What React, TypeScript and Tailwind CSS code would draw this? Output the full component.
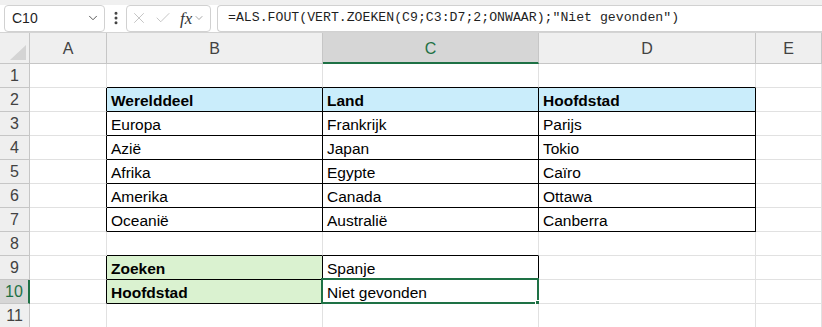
import { Check, ChevronDown, EllipsisVertical, X } from "lucide-react";

type Cell = { text?: string; bold?: boolean };

const COLUMNS = ["A", "B", "C", "D", "E"];
const ROWS = [1, 2, 3, 4, 5, 6, 7, 8, 9, 10, 11];

// sheet content, keyed by row -> column index (0 = A)
const DATA: Record<number, Record<number, Cell>> = {
  2: { 1: { text: "Werelddeel", bold: true }, 2: { text: "Land", bold: true }, 3: { text: "Hoofdstad", bold: true } },
  3: { 1: { text: "Europa" }, 2: { text: "Frankrijk" }, 3: { text: "Parijs" } },
  4: { 1: { text: "Azië" }, 2: { text: "Japan" }, 3: { text: "Tokio" } },
  5: { 1: { text: "Afrika" }, 2: { text: "Egypte" }, 3: { text: "Caïro" } },
  6: { 1: { text: "Amerika" }, 2: { text: "Canada" }, 3: { text: "Ottawa" } },
  7: { 1: { text: "Oceanië" }, 2: { text: "Australië" }, 3: { text: "Canberra" } },
  9: { 1: { text: "Zoeken", bold: true }, 2: { text: "Spanje" } },
  10: { 1: { text: "Hoofdstad", bold: true }, 2: { text: "Niet gevonden" } },
};

const inTable = (r: number, c: number) => r >= 2 && r <= 7 && c >= 1 && c <= 3;
const inLookup = (r: number, c: number) => (r === 9 || r === 10) && (c === 1 || c === 2);
const boxed = (r: number, c: number) => inTable(r, c) || inLookup(r, c);

function fillFor(r: number, c: number) {
  if (r === 2 && c >= 1 && c <= 3) return "bg-[#caedfb]";
  if ((r === 9 || r === 10) && c === 1) return "bg-[#daf2d0]";
  return "bg-white";
}

function SheetCell({ r, c }: { r: number; c: number }) {
  const cell = DATA[r]?.[c];
  const right = boxed(r, c) || boxed(r, c + 1) ? "border-r-black" : "border-r-[#e1e1e1]";
  const bottom = boxed(r, c) || boxed(r + 1, c) ? "border-b-black" : "border-b-[#e1e1e1]";
  const selected = r === 10 && c === 2;

  return (
    <div className={`relative h-6 border-r border-b flex items-end pb-[1px] pl-[4px] ${right} ${bottom} ${fillFor(r, c)}`}>
      {cell?.text && (
        <span className={`text-[15.5px] leading-[18px] text-black whitespace-nowrap ${cell.bold ? "font-bold" : ""}`}>
          {cell.text}
        </span>
      )}
      {selected && (
        <div className="absolute -top-[2px] -left-[2px] -right-[1px] -bottom-[1px] border-2 border-[#1e7145]">
          <div className="absolute -right-[4px] -bottom-[4px] w-[6px] h-[6px] bg-[#1e7145] border border-white" />
        </div>
      )}
    </div>
  );
}

function FormulaBar() {
  return (
    <div className="h-[33px] bg-white border-b border-[#d4d4d4] flex flex-col">
      <div className="h-[7px] bg-[#f0f0f0]" />
      <div className="flex-1 flex items-stretch pl-[4px]">
        <div className="w-[101px] border border-[#d1d1d1] rounded-[4px] flex items-center justify-between pl-[7px] pr-[4px]">
          <span className="text-[14px] text-[#1f1f1f]">C10</span>
          <ChevronDown size={14} strokeWidth={1.5} className="text-[#424242]" />
        </div>
        <div className="w-[21px] flex items-center justify-center">
          <EllipsisVertical size={16} strokeWidth={2.5} className="text-[#424242]" />
        </div>
        <div className="w-[85px] border border-[#d1d1d1] rounded-[4px] flex items-center pl-[3px]">
          <X size={18} strokeWidth={1.1} className="text-[#b8b8b8]" />
          <Check size={18} strokeWidth={1.1} className="text-[#b8b8b8] ml-[6px]" />
          <span className="ml-[8px] text-[17px] italic text-[#333] font-['Liberation_Serif',serif]">fx</span>
          <ChevronDown size={12} strokeWidth={1.5} className="text-[#8a8a8a] ml-[1px]" />
        </div>
        <div className="flex-1 ml-[6px] border border-[#d1d1d1] border-r-0 rounded-l-[4px] flex items-center pl-[10px]">
          <span className="text-[13.2px] text-[#1f1f1f] font-['Liberation_Mono',monospace] whitespace-nowrap">
            =ALS.FOUT(VERT.ZOEKEN(C9;C3:D7;2;ONWAAR);"Niet gevonden")
          </span>
        </div>
      </div>
    </div>
  );
}

export default function App() {
  return (
    <div className="w-[822px] h-[327px] overflow-hidden bg-white font-['Liberation_Sans',Arial,sans-serif]">
      <FormulaBar />
      <div className="grid grid-cols-[30px_77px_216px_216px_217px_1fr]">
        {/* corner */}
        <div className="relative h-[31px] bg-[#efefef] border-r border-b border-[#c6c6c6]">
          <svg className="absolute right-[3px] bottom-[3px]" width="16" height="15" viewBox="0 0 16 15">
            <polygon points="16,0 16,15 0,15" fill="#d4d4d4" />
          </svg>
        </div>
        {COLUMNS.map((col) =>
          col === "C" ? (
            <div
              key={col}
              className="h-[31px] bg-[#d6d6d6] border-r border-r-[#c6c6c6] border-b-2 border-b-[#1e7145] flex items-center justify-center pt-[2px] text-[16px] text-[#1e7145]"
            >
              {col}
            </div>
          ) : (
            <div
              key={col}
              className="h-[31px] bg-[#efefef] border-r border-b border-[#c6c6c6] flex items-center justify-center pt-[1px] text-[16px] text-[#424242]"
            >
              {col}
            </div>
          )
        )}

        {ROWS.map((r) => (
          <div key={r} className="contents">
            {r === 10 ? (
              <div className="h-6 bg-[#d6d6d6] border-r-2 border-r-[#1e7145] border-b border-b-[#c6c6c6] flex items-center justify-center pt-[1px] text-[16px] text-[#1e7145]">
                {r}
              </div>
            ) : (
              <div className="h-6 bg-[#efefef] border-r border-b border-[#c6c6c6] flex items-center justify-center pt-[1px] text-[16px] text-[#424242]">
                {r}
              </div>
            )}
            {COLUMNS.map((_, c) => (
              <SheetCell key={c} r={r} c={c} />
            ))}
          </div>
        ))}
      </div>
    </div>
  );
}
